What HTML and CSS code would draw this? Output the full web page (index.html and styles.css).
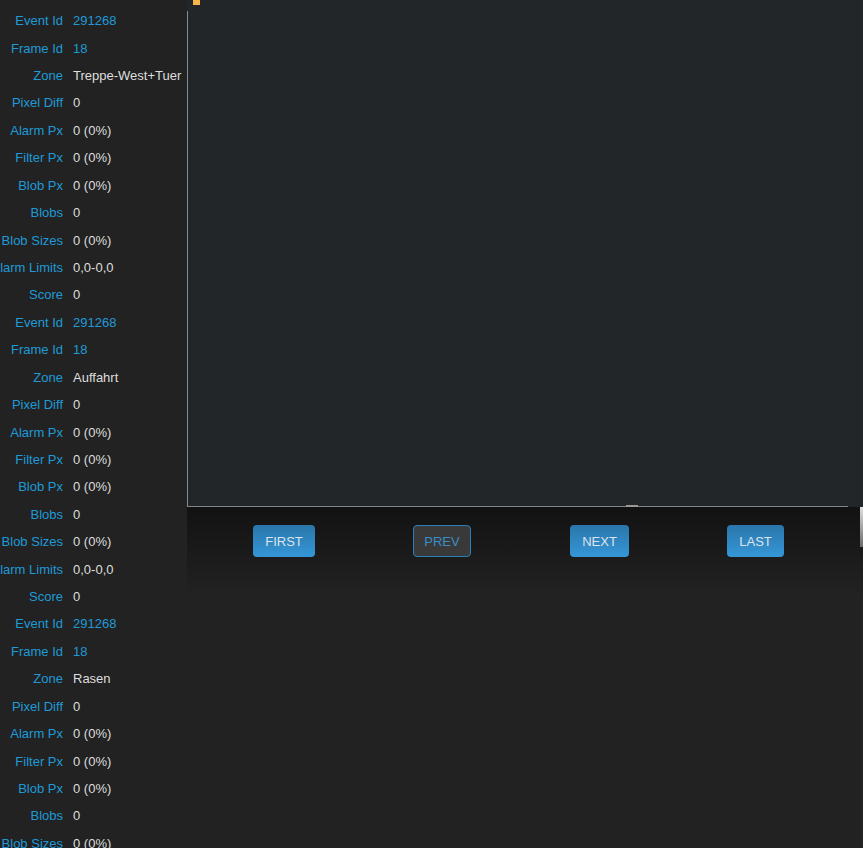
FILE: index.html
```html
<!DOCTYPE html>
<html>
<head>
<meta charset="utf-8">
<link rel="stylesheet" href="styles.css">
</head>
<body>
<div class="page">
  <div class="details">
    <div class="row"><span class="label">Event Id</span><span class="value link">291268</span></div>
    <div class="row"><span class="label">Frame Id</span><span class="value link">18</span></div>
    <div class="row"><span class="label">Zone</span><span class="value">Treppe-West+Tuer</span></div>
    <div class="row"><span class="label">Pixel Diff</span><span class="value">0</span></div>
    <div class="row"><span class="label">Alarm Px</span><span class="value">0 (0%)</span></div>
    <div class="row"><span class="label">Filter Px</span><span class="value">0 (0%)</span></div>
    <div class="row"><span class="label">Blob Px</span><span class="value">0 (0%)</span></div>
    <div class="row"><span class="label">Blobs</span><span class="value">0</span></div>
    <div class="row"><span class="label">Blob Sizes</span><span class="value">0 (0%)</span></div>
    <div class="row"><span class="label">Alarm Limits</span><span class="value">0,0-0,0</span></div>
    <div class="row"><span class="label">Score</span><span class="value">0</span></div>

    <div class="row"><span class="label">Event Id</span><span class="value link">291268</span></div>
    <div class="row"><span class="label">Frame Id</span><span class="value link">18</span></div>
    <div class="row"><span class="label">Zone</span><span class="value">Auffahrt</span></div>
    <div class="row"><span class="label">Pixel Diff</span><span class="value">0</span></div>
    <div class="row"><span class="label">Alarm Px</span><span class="value">0 (0%)</span></div>
    <div class="row"><span class="label">Filter Px</span><span class="value">0 (0%)</span></div>
    <div class="row"><span class="label">Blob Px</span><span class="value">0 (0%)</span></div>
    <div class="row"><span class="label">Blobs</span><span class="value">0</span></div>
    <div class="row"><span class="label">Blob Sizes</span><span class="value">0 (0%)</span></div>
    <div class="row"><span class="label">Alarm Limits</span><span class="value">0,0-0,0</span></div>
    <div class="row"><span class="label">Score</span><span class="value">0</span></div>

    <div class="row"><span class="label">Event Id</span><span class="value link">291268</span></div>
    <div class="row"><span class="label">Frame Id</span><span class="value link">18</span></div>
    <div class="row"><span class="label">Zone</span><span class="value">Rasen</span></div>
    <div class="row"><span class="label">Pixel Diff</span><span class="value">0</span></div>
    <div class="row"><span class="label">Alarm Px</span><span class="value">0 (0%)</span></div>
    <div class="row"><span class="label">Filter Px</span><span class="value">0 (0%)</span></div>
    <div class="row"><span class="label">Blob Px</span><span class="value">0 (0%)</span></div>
    <div class="row"><span class="label">Blobs</span><span class="value">0</span></div>
    <div class="row"><span class="label">Blob Sizes</span><span class="value">0 (0%)</span></div>
    <div class="row"><span class="label">Alarm Limits</span><span class="value">0,0-0,0</span></div>
    <div class="row"><span class="label">Score</span><span class="value">0</span></div>
  </div>

  <div class="viewer">
    <div class="frame-wrap">
      <div class="frame">
        <span class="marker"></span>
        <span class="thumb"></span>
      </div>
    </div>
    <div class="nav">
      <span class="btn">FIRST</span>
      <span class="btn disabled">PREV</span>
      <span class="btn">NEXT</span>
      <span class="btn">LAST</span>
      <span class="edge"></span>
    </div>
  </div>
</div>
</body>
</html>
```

FILE: styles.css
```css
html, body {
  margin: 0;
  padding: 0;
  background: #222222;
  overflow: hidden;
}

body {
  font-family: "Liberation Sans", Arial, sans-serif;
  font-size: 13px;
  color: #dddddd;
}

.page {
  display: flex;
  align-items: flex-start;
  height: 848px;
}

.details {
  width: 187px;
  flex: none;
  padding-top: 7px;
  background: #222222;
  align-self: stretch;
}

.row {
  display: flex;
  align-items: center;
  height: 27.43px;
}

.label {
  width: 63px;
  flex: none;
  display: flex;
  justify-content: flex-end;
  white-space: nowrap;
  color: #1f9ad7;
}

.value {
  margin-left: 10px;
  white-space: nowrap;
  color: #dedede;
}

.value.link {
  color: #1f9ad7;
}

.viewer {
  flex: 1;
  display: flex;
  flex-direction: column;
}

.frame-wrap {
  background: #232628;
  height: 507px;
}

.frame {
  position: relative;
  width: 661px;
  height: 506px;
  border-bottom: 1px solid #858585;
}

.frame::before {
  content: "";
  position: absolute;
  left: 0;
  top: 11px;
  bottom: -1px;
  width: 1px;
  background: #8a8a8a;
}

.marker {
  position: absolute;
  left: 6px;
  top: 0;
  width: 7px;
  height: 5px;
  background: #f7b548;
}

.thumb {
  position: absolute;
  left: 439px;
  bottom: -1px;
  width: 12px;
  height: 2px;
  background: #9a9a9a;
}

.nav {
  position: relative;
  display: grid;
  grid-template-columns: 158px 158px 157px 155px;
  justify-items: center;
  align-items: start;
  padding: 18px 0 0 18px;
  height: 70px;
  background: linear-gradient(#121212, #222222);
}

.btn {
  display: block;
  height: 32px;
  line-height: 31px;
  padding: 1px 12px 0;
  border-radius: 4px;
  color: #dfe3ea;
  background: linear-gradient(#2a76aa, #3597d8);
  box-sizing: border-box;
}

.btn.disabled {
  background: #393939;
  border: 1px solid #2c7fb8;
  line-height: 29px;
  padding: 1px 10px 0;
  color: #3b8ec6;
}

.edge {
  position: absolute;
  right: 0;
  top: 0;
  width: 3px;
  height: 40px;
  background: linear-gradient(#e0e0e0, #6a6a6a);
}
```
